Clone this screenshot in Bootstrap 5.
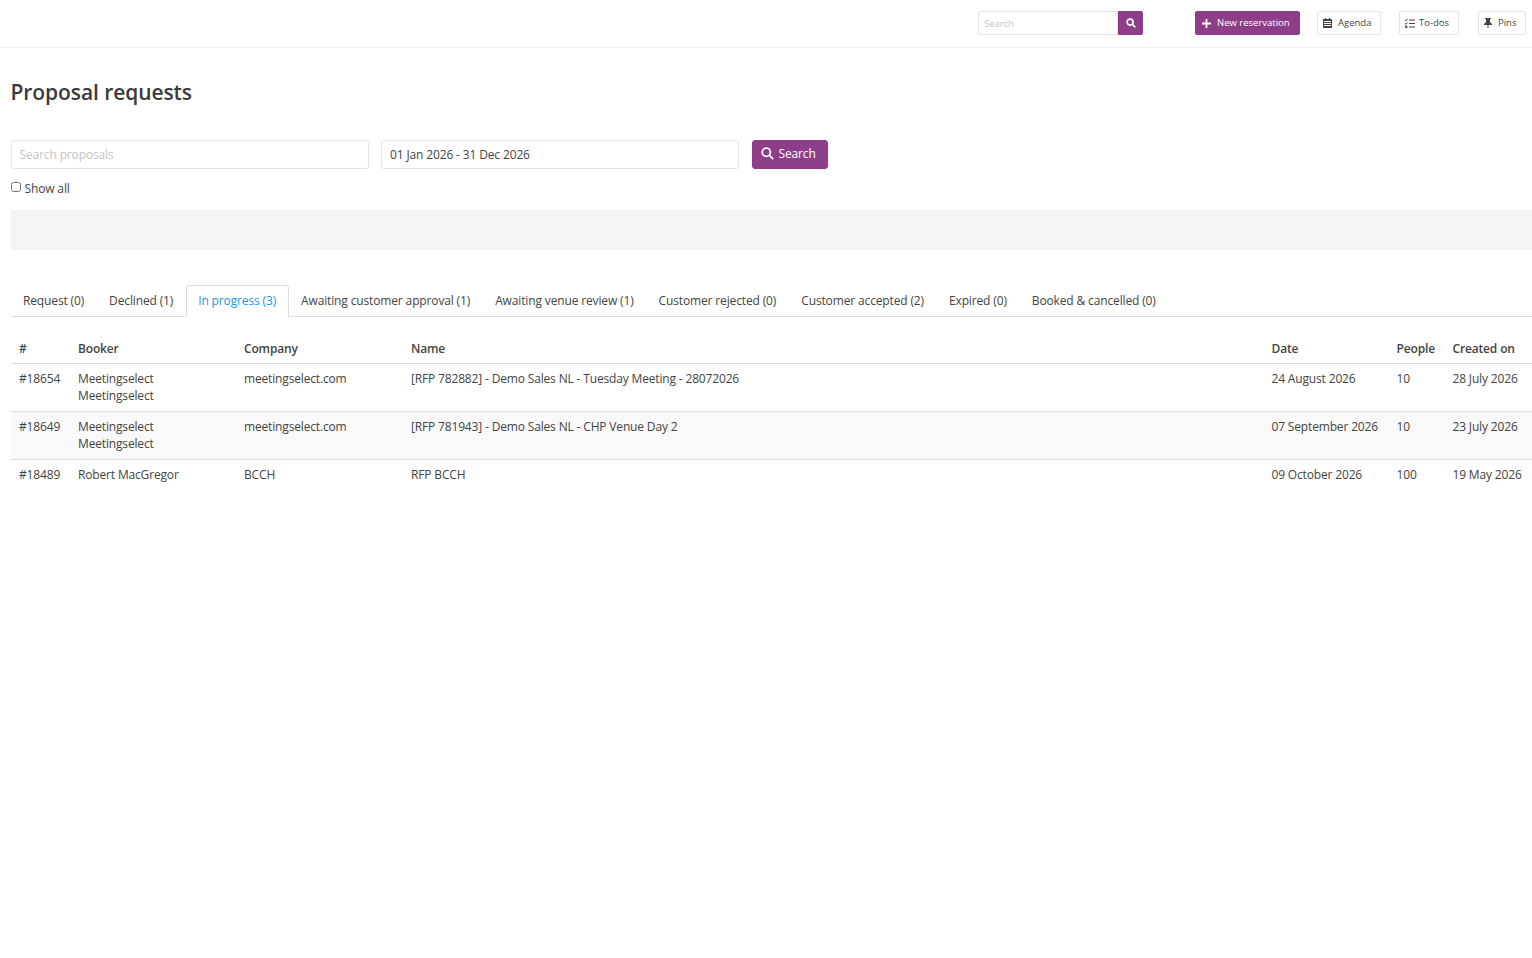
<!DOCTYPE html>
<html lang="en">

<head>
    <meta charset="UTF-8">
    <meta name="viewport" content="width=device-width, initial-scale=1.0">
    <title>Proposal requests</title>
    <link href="https://cdn.jsdelivr.net/npm/bootstrap@5.3.0/dist/css/bootstrap.min.css" rel="stylesheet">
    <style>
        body {
            font-family: "Open Sans", "Liberation Sans", sans-serif;
            font-size: 12px;
            letter-spacing: -0.14px;
            color: #444;
            background-color: #fff;
        }

        .top-bar {
            height: 48px;
            padding: 11px 6px 0 0;
            border-bottom: 1px solid #f2f2f2;
            font-size: 9.5px;
            letter-spacing: 0;
        }

        .top-search {
            width: 165px;
            margin-right: 52px;
        }

        .top-search input {
            height: 24px;
            font-size: 9.5px;
            padding: 0 5px;
            border: 1px solid #e3e3e3;
            border-radius: 2px 0 0 2px;
        }

        .top-search input::placeholder,
        .filter-input::placeholder {
            color: #c4c4c4;
        }

        .top-search .btn {
            width: 25px;
            padding: 0;
            height: 24px;
            border-radius: 0 2px 2px 0;
        }

        .btn-plum,
        .btn-plum:hover {
            background-color: #8e3d88;
            border-color: #8e3d88;
            color: #fff;
        }

        .top-btn {
            height: 24px;
            padding: 0 0 0 5px;
            font-size: 9.5px;
            border-radius: 2px;
            display: flex;
            align-items: center;
            white-space: nowrap;
        }

        .top-btn svg {
            flex-shrink: 0;
        }

        .btn-plain {
            background-color: #fff;
            border: 1px solid #e3e3e3;
            color: #444;
        }

        .new-btn {
            width: 105px;
            margin-right: 17px;
            padding-left: 6px;
            gap: 6px;
        }

        .agenda-btn {
            width: 64px;
            margin-right: 18px;
            gap: 6px;
        }

        .todo-btn {
            width: 60px;
            margin-right: 19px;
            gap: 4px;
        }

        .pins-btn {
            width: 48px;
            gap: 6px;
        }

        .page-wrap {
            padding-left: 10.5px;
        }

        .page-title {
            font-size: 21px;
            font-weight: 600;
            letter-spacing: -0.08px;
            color: #3b3b3b;
            margin: 0;
            padding-top: 29px;
            line-height: 30px;
        }

        .filter-row {
            margin-top: 33px;
            gap: 12.5px;
        }

        .filter-input {
            width: 358px;
            height: 29px;
            font-size: 12px;
            letter-spacing: -0.14px;
            padding: 0 8px;
            color: #444;
            border: 1px solid #e3e3e3;
            border-radius: 3px;
        }

        .filter-btn {
            width: 76px;
            height: 29px;
            padding: 0 0 2px 8px;
            font-size: 12px;
            letter-spacing: -0.14px;
            border-radius: 3px;
            gap: 5px;
        }

        .filter-btn svg {
            flex-shrink: 0;
        }

        .show-all {
            margin-top: 11px;
            line-height: 17px;
            gap: 3.5px;
        }

        .show-all input {
            width: 10px;
            height: 10px;
            margin: 0 0 3px 0.5px;
        }

        .grey-band {
            height: 40px;
            margin-top: 13px;
            background-color: #f4f4f4;
        }

        .tab-row {
            margin-top: 35px;
            border-bottom: 1px solid #ddd;
            height: 32px;
        }

        .tab-row .nav-link {
            color: #444;
            padding: 0 11.5px;
            line-height: 30px;
            height: 32px;
            border-radius: 3px 3px 0 0;
        }

        .tab-row .nav-link.active {
            color: #1e96e8;
            border-color: #ddd #ddd #fff;
        }

        .proposal-table {
            table-layout: fixed;
            margin-top: 16px;
            font-size: 12px;
            letter-spacing: -0.16px;
            color: #444;
            width: 1521.5px;
        }

        .proposal-table th,
        .proposal-table td {
            padding: 6px 8px 6px 8.5px;
            line-height: 17.5px;
            color: #444;
            box-shadow: none;
            background: none;
        }

        .proposal-table th {
            font-weight: 600;
            padding-top: 7px;
            padding-bottom: 5px;
            border-bottom: 1px solid #ddd;
        }

        .proposal-table td {
            border-bottom: 1px solid #ddd;
        }

        .proposal-table tr:last-child td {
            border-bottom: 0;
        }

        .row-shade td {
            background-color: #f9f9f9;
        }

        .col-id { width: 59px; }
        .col-booker { width: 166px; }
        .col-company { width: 167px; }
        .col-date { width: 125px; }
        .col-people { width: 56px; }
        .col-created { width: 88px; }
    </style>
</head>

<body>
    <!-- Top bar -->
    <div class="top-bar d-flex justify-content-end align-items-start">
        <div class="top-search d-flex">
            <input type="text" class="form-control" placeholder="Search">
            <button class="btn btn-plum d-flex align-items-center justify-content-center flex-shrink-0">
                <svg width="10" height="10" viewBox="0 0 16 16" fill="none" stroke="#fff" stroke-width="2.6"><circle cx="6.5" cy="6.5" r="4.8"/><path d="M10 10l5 5"/></svg>
            </button>
        </div>
        <button class="btn btn-plum top-btn new-btn">
            <svg width="9" height="9" viewBox="0 0 10 10" stroke="#fff" stroke-width="2"><path d="M5 0v10M0 5h10"/></svg>
            New reservation
        </button>
        <button class="btn btn-plain top-btn agenda-btn">
            <svg width="9" height="10" viewBox="0 0 9 10" fill="#444"><path d="M2 0h1v1h3V0h1v1h2v9H0V1h2zM1 3v1h7V3zm0 2v1h7V5zm0 2v1h7V7z"/></svg>
            Agenda
        </button>
        <button class="btn btn-plain top-btn todo-btn">
            <svg width="10" height="9" viewBox="0 0 10 9" fill="none" stroke="#444"><path d="M4 1h6M4 4.500h6M4 8h6M0 1l1 .8L2.500 0M0 4.500l1 .8 1.500-1.800M.3 7h1.700v1.500H.3z"/></svg>
            To-dos
        </button>
        <button class="btn btn-plain top-btn pins-btn">
            <svg width="8" height="10" viewBox="0 0 8 10" fill="#444"><path d="M1 0h6v1H6v3l2 2v1H4.500v3h-1V7H0V6l2-2V1H1z"/></svg>
            Pins
        </button>
    </div>

    <div class="page-wrap">
        <h1 class="page-title">Proposal requests</h1>

        <!-- Filters -->
        <div class="filter-row d-flex">
            <input type="text" class="form-control filter-input" placeholder="Search proposals">
            <input type="text" class="form-control filter-input" value="01 Jan 2026 - 31 Dec 2026">
            <button class="btn btn-plum filter-btn d-flex align-items-center">
                <svg width="13" height="13" viewBox="0 0 16 16" fill="none" stroke="#fff" stroke-width="2.200"><circle cx="6.500" cy="6.500" r="5"/><path d="M10 10l5 5"/></svg>
                Search
            </button>
        </div>
        <label class="show-all d-flex align-items-center">
            <input type="checkbox">
            Show all
        </label>

        <div class="grey-band"></div>

        <!-- Status tabs -->
        <ul class="nav nav-tabs tab-row">
            <li class="nav-item"><a class="nav-link" href="#">Request (0)</a></li>
            <li class="nav-item"><a class="nav-link" href="#">Declined (1)</a></li>
            <li class="nav-item"><a class="nav-link active" href="#">In progress (3)</a></li>
            <li class="nav-item"><a class="nav-link" href="#">Awaiting customer approval (1)</a></li>
            <li class="nav-item"><a class="nav-link" href="#">Awaiting venue review (1)</a></li>
            <li class="nav-item"><a class="nav-link" href="#">Customer rejected (0)</a></li>
            <li class="nav-item"><a class="nav-link" href="#">Customer accepted (2)</a></li>
            <li class="nav-item"><a class="nav-link" href="#">Expired (0)</a></li>
            <li class="nav-item"><a class="nav-link" href="#">Booked &amp; cancelled (0)</a></li>
        </ul>

        <table class="table proposal-table">
            <colgroup>
                <col class="col-id">
                <col class="col-booker">
                <col class="col-company">
                <col>
                <col class="col-date">
                <col class="col-people">
                <col class="col-created">
            </colgroup>
            <thead>
                <tr>
                    <th>#</th>
                    <th>Booker</th>
                    <th>Company</th>
                    <th>Name</th>
                    <th>Date</th>
                    <th>People</th>
                    <th>Created on</th>
                </tr>
            </thead>
            <tbody>
                <tr>
                    <td>#18654</td>
                    <td>Meetingselect Meetingselect</td>
                    <td>meetingselect.com</td>
                    <td>[RFP 782882] - Demo Sales NL - Tuesday Meeting - 28072026</td>
                    <td>24 August 2026</td>
                    <td>10</td>
                    <td>28 July 2026</td>
                </tr>
                <tr class="row-shade">
                    <td>#18649</td>
                    <td>Meetingselect Meetingselect</td>
                    <td>meetingselect.com</td>
                    <td>[RFP 781943] - Demo Sales NL - CHP Venue Day 2</td>
                    <td>07 September 2026</td>
                    <td>10</td>
                    <td>23 July 2026</td>
                </tr>
                <tr>
                    <td>#18489</td>
                    <td>Robert MacGregor</td>
                    <td>BCCH</td>
                    <td>RFP BCCH</td>
                    <td>09 October 2026</td>
                    <td>100</td>
                    <td>19 May 2026</td>
                </tr>
            </tbody>
        </table>
    </div>
</body>

</html>
